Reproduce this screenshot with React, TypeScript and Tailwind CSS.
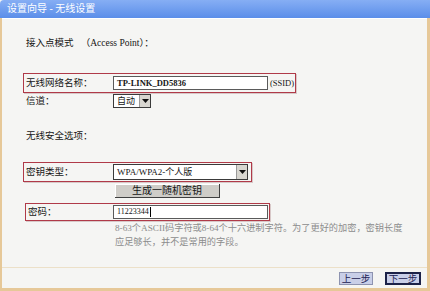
import React from 'react';

const cjk = { fontFamily: '"Liberation Serif", "Noto Sans CJK SC", serif' };

function Arrow() {
  return (
    <span className="flex h-full w-[11px] items-center justify-center border-l border-[#9a9a9a] bg-[#d8d6d0]">
      <svg width="7" height="4" viewBox="0 0 7 4">
        <path d="M0 0h7L3.5 4z" fill="#111" />
      </svg>
    </span>
  );
}

function Row({ label, boxed, width, shift = 0, children }: { label: string; boxed?: boolean; width?: string; shift?: number; children: React.ReactNode }) {
  return (
    <div
      className={`flex items-center border pl-[2px] ${boxed ? 'border-[#b03a48] shadow-[1px_1px_0_#d8c8c8]' : 'border-transparent'} ${width ?? ''} ${shift ? 'ml-[2px]' : ''}`}
    >
      <span className={shift ? 'w-[85px]' : 'w-[87px]'}>{label}</span>
      {children}
    </div>
  );
}

export default function App() {
  return (
    <div className="flex h-[291px] w-[430px] flex-col overflow-hidden bg-[#f5f5f3] text-[9.5px] leading-[12px] text-[#151515]" style={cjk}>
      <div className="flex h-[18px] items-center rounded-tl-[4px] bg-gradient-to-b from-[#86aef4] to-[#5b8ee9] pl-[7px] text-[10px] text-white">
        设置向导&nbsp;-&nbsp;无线设置
      </div>
      <div className="flex flex-1 flex-col border-b-[3px] border-l-[2px] border-r-[3px] border-[#e6c898]">
        <div className="flex flex-1 flex-col border-t border-white pl-[21px] pt-[18px]">
          <div className="pl-[3px]">接入点模式&nbsp;&nbsp;&nbsp;（Access Point）：</div>

          <div className="mt-[24px]">
            <Row label="无线网络名称：" boxed width="h-[20px] w-[273px]">
              <div className="flex h-[14px] w-[155px] items-center border border-[#5a5a5a] bg-white pl-[3px] text-[8.5px] font-bold">
                TP-LINK_DD5836
              </div>
              <span className="ml-[2px] text-[8.5px]">(SSID)</span>
            </Row>
          </div>

          <div className="mt-[1px]">
            <Row label="信道：" width="h-[14px]">
              <div className="flex h-[14px] w-[38px] items-center justify-between border border-[#3a3a3a] bg-white pl-[3px] text-[9px]">
                自动
                <Arrow />
              </div>
            </Row>
          </div>

          <div className="mt-[22px] pl-[3px]">无线安全选项：</div>

          <div className="mt-[20px]">
            <Row label="密钥类型：" boxed width="h-[20px] w-[229px]">
              <div className="flex h-[16px] w-[135px] items-center justify-between border border-[#3a3a3a] bg-white pl-[3px] text-[9px]">
                WPA/WPA2-个人版
                <Arrow />
              </div>
            </Row>
          </div>

          <div className="mt-[2px] pl-[92px]">
            <div className="flex h-[14px] w-[105px] items-center justify-center border-b border-r border-[#404040] bg-[#cfcdc8] text-[10px] shadow-[inset_1px_1px_0_#fff]">
              生成一随机密钥
            </div>
          </div>

          <div className="mt-[5px]">
            <Row label="密码：" boxed shift={1} width="h-[18px] w-[245px]">
              <div className="flex h-[14px] w-[155px] items-center border border-[#5a5a5a] bg-white pl-[3px] text-[8px]">
                11223344<span className="ml-[1px] h-[10px] w-px bg-black" />
              </div>
            </Row>
          </div>

          <div className="pl-[92px] text-[9.2px] leading-[14px] text-[#8c8c8c]">
            <div>8-63个ASCII码字符或8-64个十六进制字符。为了更好的加密，密钥长度</div>
            <div>应足够长，并不是常用的字段。</div>
          </div>
        </div>

        <div className="flex h-[21px] items-start justify-end gap-[12px] border-t border-[#ece0c8] pr-[6px] pt-[4px] text-[9.5px]">
          <div className="flex h-[13px] w-[34px] items-center justify-center border border-[#8d93b0] bg-[#c9cfe8] text-[#1a2050]">
            上一步
          </div>
          <div className="flex h-[13px] w-[36px] items-center justify-center border-2 border-[#1c2248] bg-[#c9cfe8] text-[#1a2050]">
            下一步
          </div>
        </div>
      </div>
    </div>
  );
}
